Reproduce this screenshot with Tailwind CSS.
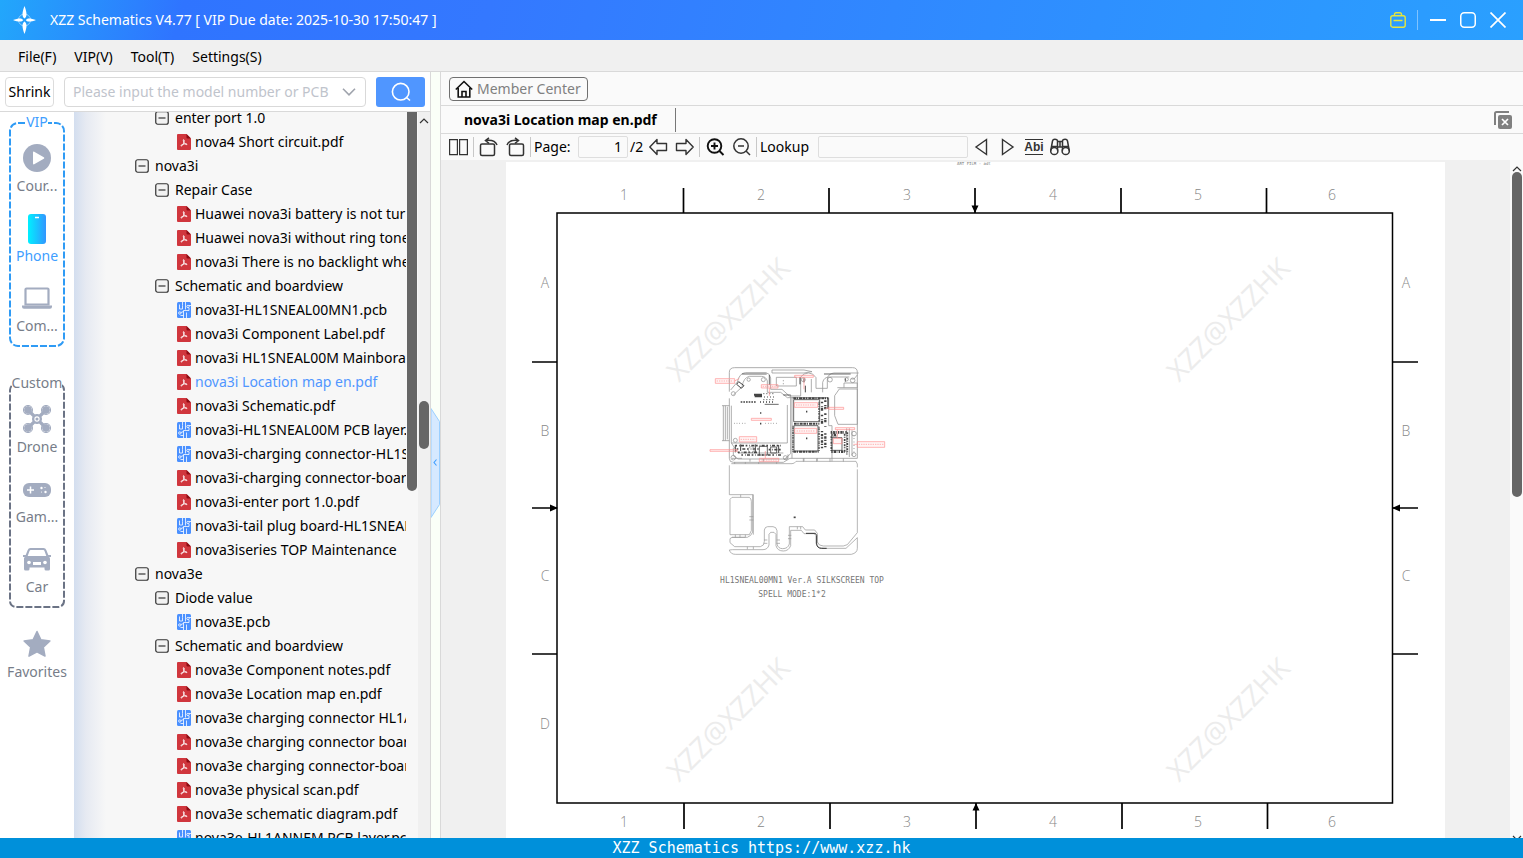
<!DOCTYPE html>
<html lang="en">
<head>
  <meta charset="UTF-8" />
  <meta name="viewport" content="width=device-width, initial-scale=1.0" />
  <title>XZZ Schematics V4.77</title>
  <script src="https://cdn.jsdelivr.net/npm/@tailwindcss/browser@4"></script>
</head>
<body class="h-screen flex flex-col overflow-hidden bg-white font-['Noto_Sans',sans-serif] text-sm leading-6 text-black">

  <!-- Shared icons -->
  <svg class="hidden">
    <symbol id="i-minus" viewBox="0 0 14 14">
      <rect x=".75" y=".75" width="12.5" height="12.5" rx="2" fill="#f2f2f2" stroke="#333" stroke-width="1.2" />
      <path d="M3.5 7h7" stroke="#333" stroke-width="1.2" />
    </symbol>
    <symbol id="i-pdf" viewBox="0 0 14 16">
      <path d="M1 0h8.500L14 4.500V15a1 1 0 0 1-1 1H1a1 1 0 0 1-1-1V1a1 1 0 0 1 1-1z" fill="#d0363d" />
      <path d="M9.500 0 14 4.500h-3.500a1 1 0 0 1-1-1z" fill="#8e0c14" />
      <path d="M6.600 5.600c1 0 .5 2.600 0 3.600-.5 1.100-1.600 3-2.500 2.900-.8-.3.5-1.400 2-1.900 1.300-.4 3.800-.6 4 .1 0 .8-2-.2-2.900-1.400C6.500 8 6 5.700 6.600 5.600z" fill="none" stroke="#fff" stroke-width=".9" />
    </symbol>
    <symbol id="i-pcb" viewBox="0 0 14 16">
      <rect width="14" height="16" rx="1.500" fill="#4a90ff" />
      <g fill="none" stroke="#fff" stroke-width=".8">
        <path d="M5.500 0v3.500M2.500 2.500v4.500h3V3.500M8.500 0v7.500M12 3.500h2M12 6v2.500H6.500V16M4 10.500l2.500-1M9.500 10.500V16M3.500 13.500h3" />
        <circle cx="11" cy="4.500" r="1.200" /><circle cx="2.800" cy="11" r="1.200" />
      </g>
    </symbol>
    <symbol id="i-up" viewBox="0 0 10 6"><path d="M1 5l4-4 4 4" fill="none" stroke="#333" stroke-width="1.200" /></symbol>
    <symbol id="i-down" viewBox="0 0 10 6"><path d="M1 1l4 4 4-4" fill="none" stroke="#333" stroke-width="1.200" /></symbol>
  </svg>

  <!-- Title bar -->
  <header class="h-10 shrink-0 flex items-center pl-3 pr-4 text-white bg-[linear-gradient(105deg,#22a7fb_0%,#2f74ff_12%,#3478ff_32%,#2f8cff_65%,#2aa0ff_100%)]">
    <svg class="w-6 h-7 shrink-0" viewBox="0 0 24 28" fill="#fff">
      <circle cx="12.500" cy="14" r="6" fill="none" stroke="#8fd0ff" stroke-width="1" />
      <path d="M12.500 0c1.200 3 2 6 2 8.500 0 2-.8 3-2 4-1.200-1-2-2-2-4 0-2.500.8-5.500 2-8.500zM12.500 28c-1.200-3-2-6-2-8.500 0-2 .8-3 2-4 1.200 1 2 2 2 4 0 2.500-.8 5.500-2 8.500zM1 14c2.500-1 5-1.600 7-1.600 1.500 0 2.500.6 3.200 1.600-.7 1-1.700 1.600-3.200 1.600-2 0-4.500-.6-7-1.600zM24 14c-2.500 1-5 1.600-7 1.600-1.500 0-2.500-.6-3.200-1.600.7-1 1.700-1.600 3.200-1.600 2 0 4.500.6 7 1.600z" />
    </svg>
    <h1 class="ml-[14px] whitespace-nowrap">XZZ Schematics V4.77 [ VIP Due date: 2025-10-30 17:50:47 ]</h1>
    <div class="ml-auto flex items-center">
      <button aria-label="Toolbox">
        <svg class="w-4 h-4" viewBox="0 0 16 16" fill="none" stroke="#e6e63c" stroke-width="1.400">
          <rect x=".8" y="3.800" width="14.400" height="11.400" rx="2" /><path d="M4.500 3.500V2.300A1.500 1.500 0 0 1 6 .8h4a1.500 1.500 0 0 1 1.500 1.500v1.200M3.500 8.500h9" />
        </svg>
      </button>
      <span class="ml-[11px] w-px h-5 bg-white/40"></span>
      <button class="ml-3" aria-label="Minimize"><svg class="w-4 h-4" viewBox="0 0 16 16" stroke="#fff" stroke-width="2"><path d="M0 8h16" /></svg></button>
      <button class="ml-[14px]" aria-label="Maximize"><svg class="w-4 h-4" viewBox="0 0 16 16" fill="none" stroke="#fff" stroke-width="1.500"><rect x=".75" y=".75" width="14.500" height="14.500" rx="3.500" /></svg></button>
      <button class="ml-[14px] mr-px" aria-label="Close"><svg class="w-4 h-4" viewBox="0 0 16 16" stroke="#fff" stroke-width="1.700"><path d="M.5.5l15 15M15.500.5l-15 15" /></svg></button>
    </div>
  </header>

  <!-- Menu -->
  <nav class="h-8 shrink-0 flex items-center gap-[18px] pl-[18px] pt-[2px] bg-[#f0f0f0] border-b border-[#d9d9d9]">
    <button>File(F)</button>
    <button>VIP(V)</button>
    <button>Tool(T)</button>
    <button>Settings(S)</button>
  </nav>

  <main class="flex-1 min-h-0 flex">

    <!-- Left panel -->
    <section class="w-[431px] shrink-0 flex flex-col border-r border-[#d9d9d9]">
      <form class="h-10 shrink-0 flex items-center pl-[5px] pr-[5px] border-b border-[#d9d9d9]">
        <button type="button" class="w-[49px] h-[30px] border border-[#dcdcdc] rounded">Shrink</button>
        <div class="ml-[10px] w-[302px] h-[30px] flex items-center pl-2 pr-2 border border-[#d9d9d9] rounded">
          <input type="text" aria-label="Model number" placeholder="Please input the model number or PCB" class="w-[263px] outline-none placeholder:text-[#bfc4cc]" />
          <button type="button" class="ml-[6px]" aria-label="History">
            <svg class="w-[14px] h-2" viewBox="0 0 14 8" fill="none" stroke="#a0a4ad" stroke-width="1.600"><path d="M1 .8l6 6 6-6" /></svg>
          </button>
        </div>
        <button type="submit" class="ml-[10px] w-[49px] h-[30px] flex items-center justify-center rounded-[3px] bg-[#5096ff]" aria-label="Search">
          <svg class="w-5 h-5" viewBox="0 0 20 20" fill="none" stroke="#fff" stroke-width="1.600"><circle cx="9.700" cy="9.700" r="8.300" /><path d="M15.500 15.500l3.500 3" /></svg>
        </button>
      </form>

      <div class="flex-1 min-h-0 flex">
        <!-- Categories -->
        <aside class="w-[74px] shrink-0 px-[9px] pt-[10px] text-[#777d89]">
          <div class="relative h-[225px] flex flex-col items-center">
            <svg class="absolute inset-0 w-full h-full" viewBox="0 0 56 225" fill="none"><rect x="1" y="1" width="54" height="223" rx="8" stroke="#2f9bf5" stroke-width="2" stroke-dasharray="7 2" /></svg>
            <h2 class="relative -mt-[10px] h-5 leading-5 bg-white text-[#409eff]">VIP</h2>
            <div class="relative mt-3 flex flex-col gap-4">
              <button class="h-[54px] w-14 flex flex-col items-center justify-between">
                <svg class="w-7 h-7" viewBox="0 0 28 28"><circle cx="14" cy="14" r="14" fill="#a3acc0" /><path d="M10 8.500c0-.8.600-1.100 1.200-.8l9.600 5.500c.6.400.6 1.200 0 1.600l-9.600 5.500c-.6.300-1.200 0-1.200-.8z" fill="#fff" /></svg>
                <span>Cour...</span>
              </button>
              <button class="h-[54px] w-14 flex flex-col items-center justify-between text-[#409eff]">
                <svg class="w-[18px] h-[30px]" viewBox="0 0 18 30"><defs><linearGradient id="ph"><stop stop-color="#00f0ff" /><stop offset="1" stop-color="#3296ff" /></linearGradient></defs><rect width="18" height="30" rx="3" fill="url(#ph)" /><path d="M7 3.500h4" stroke="#fff" stroke-width="1.500" /></svg>
                <span>Phone</span>
              </button>
              <button class="h-[54px] w-14 flex flex-col items-center justify-between">
                <svg class="w-[30px] h-7" viewBox="0 0 30 28"><path d="M3.500 20.500V5.500a1 1 0 0 1 1-1h21a1 1 0 0 1 1 1v15z" fill="none" stroke="#a3acc0" stroke-width="2.200" /><path d="M0 21.500h30v1.200a2 2 0 0 1-2 2H2a2 2 0 0 1-2-2z" fill="#a3acc0" /></svg>
                <span>Com...</span>
              </button>
            </div>
          </div>

          <div class="relative mt-9 h-[225px] flex flex-col items-center">
            <svg class="absolute inset-0 w-full h-full" viewBox="0 0 56 225" fill="none"><rect x="1" y="1" width="54" height="223" rx="6" stroke="#6b7385" stroke-width="2" stroke-dasharray="7 2" /></svg>
            <h2 class="relative -mt-[10px] h-5 leading-5 bg-white">Custom</h2>
            <div class="relative mt-3 flex flex-col gap-4">
              <button class="h-[54px] w-14 flex flex-col items-center justify-between">
                <svg class="w-7 h-7" viewBox="0 0 28 28" fill="none" stroke="#a3acc0"><g fill="#a3acc0"><circle cx="5" cy="5" r="3.400" /><circle cx="23" cy="5" r="3.400" /><circle cx="5" cy="23" r="3.400" /><circle cx="23" cy="23" r="3.400" /></g><g stroke-width="1.100"><circle cx="5" cy="5" r="4.500" /><circle cx="23" cy="5" r="4.500" /><circle cx="5" cy="23" r="4.500" /><circle cx="23" cy="23" r="4.500" /></g><path d="M5 5l9 9 9-9M5 23l9-9 9 9" stroke-width="3.200" /><circle cx="14" cy="14" r="4.500" fill="#a3acc0" /><circle cx="14" cy="14" r="2.100" fill="#a3acc0" stroke="#fff" stroke-width="1.100" /></svg>
                <span>Drone</span>
              </button>
              <button class="h-[54px] w-14 flex flex-col items-center justify-between">
                <svg class="w-7 h-7" viewBox="0 0 28 28"><rect y="8" width="28" height="14" rx="6" fill="#a3acc0" /><path d="M7.500 11.500v7M4 15h7" stroke="#fff" stroke-width="1.500" /><circle cx="18.500" cy="13" r="1.200" fill="#fff" /><circle cx="22.500" cy="17" r="1.200" fill="#fff" /><circle cx="22" cy="12.500" r=".6" fill="#fff" /><circle cx="18.500" cy="17" r=".6" fill="#fff" /></svg>
                <span>Gam...</span>
              </button>
              <button class="h-[54px] w-14 flex flex-col items-center justify-between">
                <svg class="w-7 h-7" viewBox="0 0 28 28" fill="#a3acc0"><path d="M7.500 3h13a3 3 0 0 1 2.800 2l2 5H28v2h-1.800c.8.700.8 1.400.8 2.500V24a1.500 1.500 0 0 1-1.500 1.500H23a1.500 1.500 0 0 1-1.500-1.500v-1.500h-15V24A1.500 1.500 0 0 1 5 25.500H2.500A1.500 1.500 0 0 1 1 24v-9.500c0-1.100 0-1.800.8-2.500H0v-2h2.700l2-5a3 3 0 0 1 2.800-2z" /><path d="M7.800 5h12.400c.7 0 1.100.300 1.300.9L23.300 11H4.700l1.800-5.100c.2-.6.600-.9 1.300-.9zM10 17h8v3h-8z" fill="#fff" /><circle cx="6" cy="17.500" r="1.800" fill="#fff" /><circle cx="22" cy="17.500" r="1.800" fill="#fff" /></svg>
                <span>Car</span>
              </button>
            </div>
          </div>

          <button class="-mx-[9px] mt-[22px] h-[54px] w-[74px] flex flex-col items-center justify-between">
            <svg class="w-7 h-7" viewBox="0 0 28 28"><path d="M14 1.500l3.900 8.200 9 1.200-6.600 6.200 1.700 9L14 21.800l-8 4.300 1.700-9L1.100 10.900l9-1.200z" fill="#a3acc0" stroke="#a3acc0" stroke-width="1.500" stroke-linejoin="round" /></svg>
            <span>Favorites</span>
          </button>
        </aside>

        <!-- File tree -->
        <div class="flex-1 min-w-0 flex overflow-hidden bg-[#f7f7f7] bg-[linear-gradient(90deg,#d3deef_0,#e6eaf2_12px,#f7f7f7_32px)]">
          <ul id="tree" class="flex-1 min-w-0 -mt-[6px] overflow-hidden whitespace-nowrap"></ul>
          <div class="ml-px w-[10px] h-[379px] shrink-0 rounded-b-full bg-[#666]"></div>
          <div class="ml-px w-3 shrink-0 flex flex-col items-center bg-[#f0f0f0]">
            <svg class="mt-[6px] w-[10px] h-[6px]"><use href="#i-up" /></svg>
            <div class="mt-[277px] w-[10px] h-12 rounded-full bg-[#666]"></div>
          </div>
        </div>
      </div>
    </section>

    <!-- Splitter -->
    <div class="w-[9px] shrink-0 flex items-center pt-4 bg-[#fafff8]">
      <button aria-label="Collapse">
        <svg class="w-[9px] h-[110px]" viewBox="0 0 9 110"><path d="M0 .5l8.500 13v83L0 109.500z" fill="#d6e9ff" stroke="#9acfff" /><path d="M5.500 51.500L3 54.500l2.500 3" fill="none" stroke="#409eff" stroke-width="1.100" /></svg>
      </button>
    </div>

    <!-- Viewer -->
    <section class="flex-1 min-w-0 flex flex-col border-l border-[#d9d9d9] bg-[#fafafa]">
      <div class="h-[34px] shrink-0 flex items-center pl-2 border-b border-[#d9d9d9]">
        <button class="h-6 w-[139px] flex items-center pl-[5px] border border-[#707070] rounded text-[#808080] whitespace-nowrap">
          <svg class="w-[18px] h-[18px] mr-1 shrink-0" viewBox="0 0 18 18" fill="none" stroke="#111" stroke-width="1.600"><path d="M.8 9.500L9 1.500l8.200 8M3.200 8v9h11.600V8" /><path d="M7 17v-5.500h4V17" /></svg>
          Member Center
        </button>
      </div>
      <div class="h-7 shrink-0 flex items-center border-b border-[#d9d9d9]">
        <button class="pl-[23px] pr-[18px] h-6 border-r border-[#777] font-bold whitespace-nowrap">nova3i Location map en.pdf</button>
        <button class="ml-auto mr-[11px]" aria-label="Close all tabs">
          <svg class="w-[18px] h-[18px]" viewBox="0 0 18 18"><path d="M1 14V2.500A1.500 1.500 0 0 1 2.500 1H15" fill="none" stroke="#808080" stroke-width="2" /><rect x="4" y="4" width="14" height="14" rx="2" fill="#808080" /><path d="M8 8l6 6M14 8l-6 6" stroke="#fff" stroke-width="1.700" /></svg>
        </button>
      </div>

      <div class="h-[26px] shrink-0 flex items-center pl-2">
        <button aria-label="Two pages"><svg class="w-5 h-[18px]" viewBox="0 0 20 18" fill="none" stroke="#333" stroke-width="1.200"><path d="M.6 1.600h7.800v15H.6zM10.600 1.600h7.800v15h-7.800z" /></svg></button>
        <span class="ml-1 w-px h-5 bg-[#c8c8c8]"></span>
        <button class="ml-[5px]" aria-label="Rotate left"><svg class="w-5 h-5" viewBox="0 0 20 20" fill="none" stroke="#333" stroke-width="1.500"><rect x="1.500" y="7" width="14" height="11.500" rx="1.500" /><path d="M10 .8L6.500 3.500 10 6.300M6.500 3.500c6-.8 10 .5 11.500 4.500" /></svg></button>
        <button class="ml-[7px]" aria-label="Rotate right"><svg class="w-5 h-5" viewBox="0 0 20 20" fill="none" stroke="#333" stroke-width="1.500"><rect x="3.500" y="7" width="14" height="11.500" rx="1.500" /><path d="M9 .8l3.500 2.700L9 6.300M12.500 3.500C6.500 2.700 2.500 4 1 8" /></svg></button>
        <span class="ml-1 w-px h-5 bg-[#c8c8c8]"></span>
        <label for="page" class="ml-[3px] w-11">Page:</label>
        <input id="page" type="text" value="1" class="w-[50px] h-[22px] pr-[5px] text-right border border-[#dedede] rounded-[2px] bg-[#fafafa]" />
        <span class="ml-[2px] w-[18px]">/2</span>
        <button class="ml-px" aria-label="Previous page"><svg class="w-5 h-5" viewBox="0 0 20 20" fill="none" stroke="#333" stroke-width="1.400" stroke-linejoin="round"><path d="M.8 10L8 2.500V6.500h9.500v7H8v4z" /></svg></button>
        <button class="ml-[6px]" aria-label="Next page"><svg class="w-5 h-5" viewBox="0 0 20 20" fill="none" stroke="#333" stroke-width="1.400" stroke-linejoin="round"><path d="M18.200 10L11 2.500v4H1.500v7H11v4z" /></svg></button>
        <span class="ml-1 w-px h-5 bg-[#c8c8c8]"></span>
        <button class="ml-[6px]" aria-label="Zoom in"><svg class="w-5 h-5" viewBox="0 0 20 20" fill="none" stroke="#111" stroke-width="1.900"><circle cx="8.500" cy="9" r="6.800" /><path d="M13.500 14l4 4M5 9h7M8.500 5.500v7" /></svg></button>
        <button class="ml-[6px]" aria-label="Zoom out"><svg class="w-5 h-5" viewBox="0 0 20 20" fill="none" stroke="#333" stroke-width="1.500"><circle cx="9" cy="9" r="7.200" /><path d="M14 14l4 4M6 9h6" /></svg></button>
        <span class="ml-1 w-px h-5 bg-[#c8c8c8]"></span>
        <label for="lookup" class="ml-[3px] w-[58px]">Lookup</label>
        <input id="lookup" type="text" class="w-[150px] h-[22px] px-1 border border-[#dedede] rounded-[2px] bg-[#fafafa]" />
        <button class="ml-[6px]" aria-label="Find previous"><svg class="w-4 h-[18px]" viewBox="0 0 16 18" fill="none" stroke="#333" stroke-width="1.400"><path d="M12.500 1.500v15L2 9z" /></svg></button>
        <button class="ml-[10px]" aria-label="Find next"><svg class="w-4 h-[18px]" viewBox="0 0 16 18" fill="none" stroke="#333" stroke-width="1.400"><path d="M2.500 1.500v15L13 9z" /></svg></button>
        <button class="ml-[9px] h-4 w-[18px] flex items-center justify-center border-y border-[#333] font-['Liberation_Sans',sans-serif] text-xs leading-3 font-bold text-[#333]">Abi</button>
        <button class="ml-[7px]" aria-label="Find in all"><svg class="w-5 h-[18px]" viewBox="0 0 20 18" fill="none" stroke="#333" stroke-width="1.500"><path d="M.8 12.500L2.500 3c.3-1.300 1-1.800 2.300-1.800S7.500 2 7.500 3v9.500M19.200 12.500L17.500 3c-.3-1.300-1-1.800-2.300-1.800s-2.700.8-2.700 1.800v9.500M7.500 3.500h5M7.500 9h5M10 3.500V9M2 8.500h5.500M12.500 8.500H18" /><circle cx="4.300" cy="13" r="3.600" /><circle cx="15.700" cy="13" r="3.600" /></svg></button>
      </div>

      <div class="flex-1 min-h-0 flex bg-[#f0f0f0]">
        <div class="flex-1 min-w-0 flex justify-center overflow-hidden pt-[2px]">
          <svg class="w-[939px] h-[676px] shrink-0 bg-white" viewBox="506 162 939 676" fill="none">
            <g fill="#ececec" font-family="Open Sans, sans-serif" font-size="28" text-anchor="middle">
              <text x="729" y="329" transform="rotate(-45 729 320)">XZZ@XZZHK</text>
              <text x="1229" y="329" transform="rotate(-45 1229 320)">XZZ@XZZHK</text>
              <text x="729" y="729" transform="rotate(-45 729 720)">XZZ@XZZHK</text>
              <text x="1229" y="729" transform="rotate(-45 1229 720)">XZZ@XZZHK</text>
            </g>

            <!-- Sheet frame -->
            <g stroke="#000" stroke-width="2">
              <path d="M557 213H1392.500V803H557z" stroke-width="1.500" />
              <path d="M683.500 188v25M829 188v25M975 188v25M1121 188v25M1266.500 188v25M684 803v26M830 803v26M976 803v26M1122 803v26M1267.500 803v26" stroke-width="1.700" />
              <path d="M532 362h25M532 508h25M532 654h25M1393 362h25M1393 508h25M1393 654h25" stroke-width="1.700" />
            </g>
            <path d="M971.500 205.500h7L975 213zM972.500 810.500h7L976 803zM550 504.500v7l8-3.500zM1400 504.500v7l-8-3.500z" fill="#000" />
            <g fill="#888" font-family="Open Sans, sans-serif" font-weight="300" font-size="14" text-anchor="middle">
              <text x="624" y="200">1</text><text x="761" y="200">2</text><text x="907" y="200">3</text><text x="1053" y="200">4</text><text x="1198" y="200">5</text><text x="1332" y="200">6</text>
              <text x="624" y="827">1</text><text x="761" y="827">2</text><text x="907" y="827">3</text><text x="1053" y="827">4</text><text x="1198" y="827">5</text><text x="1332" y="827">6</text>
              <text x="545" y="288">A</text><text x="545" y="436">B</text><text x="545" y="581">C</text><text x="545" y="729">D</text>
              <text x="1406" y="288">A</text><text x="1406" y="436">B</text><text x="1406" y="581">C</text>
            </g>
            <text x="957" y="165" fill="#777" font-family="DejaVu Sans Mono, monospace" font-size="4">ART FILM - adt</text>

            <!-- Board, upper half -->
            <g transform="translate(700 355) scale(.33333)" stroke="#999" stroke-width="2.400">
              <path d="M88 70V52q0-14 16-14H458q14 0 14 14v8l-10 12h-8M88 70v40M88 130v180q0 12 12 12H250l20-12H472V60" />
              <path d="M92 105l20-24q6-26 24-28h62q12 2 14 16v34h34l22 20h34V66q8-12 24-12 14 0 22 14v32h34V72q2-16 20-18h74" />
              <path d="M100 120l26-24q4-28 22-32h36q14 0 18 14v34h40l20 16h120M334 112V72M368 112V82q4-16 20-16h60" />
              <path d="M216 45h96l24 5-24 4h-96zM229 67h60v26h-60zM250 75v4M250 84v4M404 122l14-20h54M404 122v60l10 26h58M472 102v106M412 98h60v-14h-40v14" />
              <path d="M70 152v105M76 152v105M82 155v98M66 152h22M66 257h22M94 152v112h168V150M94 264l20 30H250" />
              <path d="M276 128h110v84h10v98M276 128v182M272 120v176l-20 18M440 220v80M448 220v86M456 226v76" />
              <path d="M100 278v24l14 10h150v-14M96 310h30M150 312v8M190 312v8M310 310v10M350 310v10M390 310v10M430 310v10" />
            </g>
            <g transform="translate(700 355) scale(.33333)" stroke="#444" stroke-width="2.400">
              <path d="M281 134h78v66h-78zM282 212h72v76h-72z" /><path d="M396 248h30v38h-30zM178 274h24v26h-24zM212 276h18v18h-18z" />
              <path d="M126 57h74M372 57h80M208 60v30M250 120h22M194 148h42" />
              <path d="M122 141h46" stroke-dasharray="5 3" stroke-width="4" /><path d="M180 141h42" stroke-dasharray="3 6" stroke-width="4" />
              <path d="M162 119h24M164 124h22" stroke-width="6" />
              <path d="M280 130h104M282 206h76M280 290h76" stroke-width="6" stroke-dasharray="8 2 4 3 9 2" />
              <path d="M279 212v78M357 140v60M357 215v74" stroke-width="4" stroke-dasharray="3 2 6 3" />
              <path d="M366 140v76M376 136v80" stroke-width="7" stroke-dasharray="5 9 3 2 8 12" />
              <path d="M366 228v52M376 235v42" stroke-width="7" stroke-dasharray="4 5 7 3" />
              <path d="M384 128v34" stroke-width="4" />
              <path d="M392 232h48M394 240h16M394 290h44" stroke-width="8" stroke-dasharray="4 3 7 2 2 4" />
              <path d="M394 244v44M434 236v56M442 232v66" stroke-width="5" stroke-dasharray="6 3 3 4" />
              <path d="M106 272h140M110 282h66M206 284h40M114 292h60M124 300h120" stroke-width="5" stroke-dasharray="5 6 2 4 9 5" />
              <path d="M106 270v22M122 268v20M166 268v24M236 270v24" stroke-width="3" />
              <path d="M116 80l16 12-8 8-14-12zM300 66v22M312 70v12M316 92v20M436 70v10" stroke-width="3" />
              <path d="M102 205h40M196 205h40" stroke-width="2" stroke-dasharray="2 6" /><path d="M190 116h30M192 126h32M190 134h30" stroke-width="3" stroke-dasharray="3 6" />
              <path d="M180 206h4M180 174h4M318 170h4M318 250h4" stroke-width="5" /><path d="M462 240v60" stroke-dasharray="2 8" />
            </g>
            <g transform="translate(700 355) scale(.33333)" stroke="#888" stroke-width="2">
              <circle cx="100" cy="116" r="6" /><circle cx="146" cy="74" r="5" /><circle cx="190" cy="74" r="6" /><circle cx="310" cy="74" r="6" /><circle cx="390" cy="74" r="7" /><circle cx="458" cy="76" r="7" /><circle cx="440" cy="73" r="5" /><circle cx="100" cy="308" r="7" /><circle cx="256" cy="308" r="6" /><circle cx="462" cy="236" r="7" /><circle cx="462" cy="299" r="6" /><circle cx="154" cy="284" r="9" /><circle cx="106" cy="256" r="6" /><circle cx="404" cy="238" r="8" />
            </g>
            <g transform="translate(700 355) scale(.33333)" fill="#ff5050" fill-opacity=".06" stroke="#ff9090" stroke-width="2">
              <path d="M46 71h58v14H46zM184 89h50v10h-50zM284 61h56v6h-56zM283 143h70v14h-70zM284 220h66v15h-66zM154 190h60v6h-60zM118 245h52v16h-52zM178 310h58v10h-58zM386 157h45v6h-45zM406 218h58v6h-58zM472 260h82v17h-82zM400 250h26v16h-26zM30 284h82v5H30z" />
              <path d="M50 78h50M188 94h42M288 150h58M290 228h54M122 253h44M184 315h46M476 268h74" stroke-dasharray="4 3" />
              <path d="M104 78l14-8M208 99v24M312 67v36M386 160h-10M412 224v26M472 268h-12M196 310v-22" />
            </g>

            <!-- Board, lower half -->
            <g transform="translate(700 450) scale(.33333)" stroke="#999" stroke-width="2.200">
              <path d="M94 41H276q8 0 12-7H468l4 8v10M472 58v190l-30 36-12 4h-60q-14 0-18-12v-26l-8-10h-28l-8-10h-40v52q-4 14-20 14-14 0-17-14v-40q-2-12-12-12h-16q-8 0-10 10v34q0 14-12 16H104l-14-12v-12l6-4h46q12-4 16-16V134M88 46v88h72v120" />
              <path d="M96 142h52q6 4 6 12v88l-6 12H90V148zM96 262h40M88 300q4 13 18 13H454q18-4 18-18v-32l-34 32H372q-22 0-24-16v-22l-6-6h-30l-8-10h-32v46q-6 16-22 16-18 0-22-16v-34l-6-6h-10l-5 6v32q-4 14-18 14H98z" />
              <path d="M122 134v8M142 290v8M160 290v8M106 254v8M120 254v8M136 254v8M148 200h12M148 210h12M192 270h10M192 280h10M230 270h10M230 280h10M264 256h10M264 266h10M292 230v8M302 230v8M312 24v10M352 24v10M396 24v10M104 36v6M136 36v6M176 36v6M230 36v6" />
              <path d="M318 250h28l4 6v26q2 13 14 13h16" stroke="#333" stroke-width="3" /><path d="M281 202h6" stroke="#444" stroke-width="5" />
            </g>
            <g fill="#777" font-family="DejaVu Sans Mono, monospace" font-size="8" text-anchor="middle">
              <text x="802" y="583">HL1SNEAL00MN1 Ver.A SILKSCREEN TOP</text>
              <text x="792" y="597">SPELL MODE:1*2</text>
            </g>
          </svg>
        </div>
        <div class="w-[13px] shrink-0 flex flex-col items-center overflow-hidden bg-[#fafafa]">
          <svg class="mt-[6px] w-[10px] h-[6px] shrink-0"><use href="#i-up" /></svg>
          <div class="w-[10px] h-[325px] shrink-0 rounded-full bg-[#666]"></div>
          <svg class="mt-auto -mb-[3px] w-[10px] h-[6px] shrink-0"><use href="#i-down" /></svg>
        </div>
      </div>
    </section>
  </main>

  <footer class="h-5 shrink-0 bg-[#0090da] text-center text-white text-[15px] leading-5 font-['DejaVu_Sans_Mono',monospace]">XZZ Schematics https://www.xzz.hk</footer>

  <script>
    // [kind, label] - top and sub are folders, the rest are files
    const rows = [
      ['sub', 'enter port 1.0'],
      ['pdf', 'nova4 Short circuit.pdf'],
      ['top', 'nova3i'],
      ['sub', 'Repair Case'],
      ['pdf', 'Huawei nova3i battery is not turned on.pdf'],
      ['pdf', 'Huawei nova3i without ring tone.pdf'],
      ['pdf', 'nova3i There is no backlight when.pdf'],
      ['sub', 'Schematic and boardview'],
      ['pcb', 'nova3I-HL1SNEAL00MN1.pcb'],
      ['pdf', 'nova3i Component Label.pdf'],
      ['pdf', 'nova3i HL1SNEAL00M Mainborad.pdf'],
      ['pdf', 'nova3i Location map en.pdf', true],
      ['pdf', 'nova3i Schematic.pdf'],
      ['pcb', 'nova3i-HL1SNEAL00M PCB layer.pcb'],
      ['pcb', 'nova3i-charging connector-HL1SNEAL.pcb'],
      ['pdf', 'nova3i-charging connector-board.pdf'],
      ['pdf', 'nova3i-enter port 1.0.pdf'],
      ['pcb', 'nova3i-tail plug board-HL1SNEAL.pcb'],
      ['pdf', 'nova3iseries TOP Maintenance'],
      ['top', 'nova3e'],
      ['sub', 'Diode value'],
      ['pcb', 'nova3E.pcb'],
      ['sub', 'Schematic and boardview'],
      ['pdf', 'nova3e Component notes.pdf'],
      ['pdf', 'nova3e Location map en.pdf'],
      ['pcb', 'nova3e charging connector HL1ANNEM.pcb'],
      ['pdf', 'nova3e charging connector board.pdf'],
      ['pdf', 'nova3e charging connector-board.pdf'],
      ['pdf', 'nova3e physical scan.pdf'],
      ['pdf', 'nova3e schematic diagram.pdf'],
      ['pcb', 'nova3e-HL1ANNEM PCB layer.pcb']
    ];

    document.getElementById('tree').innerHTML = rows.map(([kind, label, active]) => {
      if (kind === 'top' || kind === 'sub') {
        const pad = kind === 'top' ? 'pl-[61px]' : 'pl-[81px]';
        return `<li class="h-6 ${pad}"><button class="flex h-6 items-center gap-[6px]"><svg class="w-[14px] h-[14px]"><use href="#i-minus" /></svg>${label}</button></li>`;
      }
      const color = active ? 'text-[#5096ff]' : 'text-black';
      return `<li class="h-6 pl-[103px]"><a href="#" class="flex h-6 items-center gap-1 ${color}"><svg class="w-[14px] h-4 shrink-0"><use href="#i-${kind}" /></svg>${label}</a></li>`;
    }).join('');
  </script>
</body>
</html>
